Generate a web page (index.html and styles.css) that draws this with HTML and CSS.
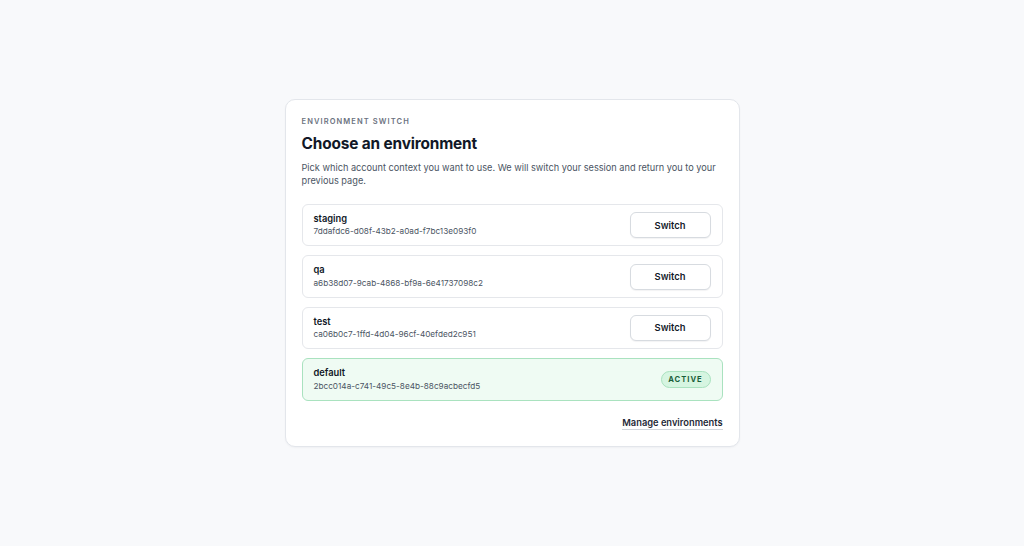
FILE: index.html
```html
<!DOCTYPE html>
<html lang="en">
<head>
<meta charset="utf-8">
<title>Choose an environment</title>
<link rel="stylesheet" href="styles.css">
</head>
<body>
<main class="page">
  <section class="card">
    <div class="eyebrow">ENVIRONMENT SWITCH</div>
    <h1 class="title">Choose an environment</h1>
    <p class="desc">Pick which account context you want to use. We will switch your session and return you to your previous page.</p>
    <ul class="envs">
      <li class="env">
        <div class="env-info"><div class="env-name">staging</div><div class="env-id">7ddafdc6-d08f-43b2-a0ad-f7bc13e093f0</div></div>
        <button class="btn">Switch</button>
      </li>
      <li class="env">
        <div class="env-info"><div class="env-name">qa</div><div class="env-id">a6b38d07-9cab-4868-bf9a-6e41737098c2</div></div>
        <button class="btn">Switch</button>
      </li>
      <li class="env">
        <div class="env-info"><div class="env-name">test</div><div class="env-id">ca06b0c7-1ffd-4d04-96cf-40efded2c951</div></div>
        <button class="btn">Switch</button>
      </li>
      <li class="env env-active">
        <div class="env-info"><div class="env-name">default</div><div class="env-id">2bcc014a-c741-49c5-8e4b-88c9acbecfd5</div></div>
        <span class="badge">ACTIVE</span>
      </li>
    </ul>
    <div class="footer"><a class="manage" href="#">Manage environments</a></div>
  </section>
</main>
</body>
</html>
```

FILE: styles.css
```css
* { box-sizing: border-box; }
html, body { margin: 0; padding: 0; }
body {
  background: #f8f9fb;
  font-family: Inter, "Noto Sans", sans-serif;
  color: #111827;
}
.page {
  height: 546px;
  display: flex;
  align-items: center;
  justify-content: center;
}
.card {
  width: 455px;
  background: #ffffff;
  border: 1px solid #e3e6eb;
  border-radius: 10px;
  padding: 16px 16px 16px;
  box-shadow: 0 1px 2px rgba(16, 24, 40, 0.04);
}
.eyebrow {
  font-size: 7.5px;
  font-weight: 600;
  letter-spacing: 1.1px;
  color: #6b7280;
  line-height: 12px;
}
.title {
  margin: 6.5px 0 0;
  font-size: 15.4px;
  font-weight: 700;
  line-height: 20px;
  letter-spacing: -0.15px;
  color: #111827;
}
.desc {
  margin: 6.5px 0 0;
  font-size: 9.2px;
  line-height: 13px;
  color: #4b5563;
}
.envs {
  list-style: none;
  margin: 17px 0 0;
  padding: 0;
  display: flex;
  flex-direction: column;
  gap: 8.8px;
}
.env {
  display: flex;
  align-items: center;
  justify-content: space-between;
  height: 42.6px;
  padding: 0 11px;
  border: 1px solid #e5e7eb;
  border-radius: 6px;
  background: #fff;
}
.env-active {
  background: #effbf3;
  border-color: #a9e2bf;
}
.env-name {
  font-size: 9.3px;
  font-weight: 600;
  line-height: 12px;
  color: #111827;
}
.env-id {
  font-size: 8.2px;
  line-height: 11px;
  color: #4b5563;
  margin-top: 1.5px;
}
.btn {
  width: 81px;
  height: 26px;
  border: 1px solid #d7dbe0;
  border-radius: 6px;
  background: #fff;
  font-family: inherit;
  font-size: 9.4px;
  font-weight: 600;
  color: #111827;
  box-shadow: 0 1px 1px rgba(16, 24, 40, 0.05);
}
.badge {
  display: inline-flex;
  align-items: center;
  justify-content: center;
  width: 50px;
  height: 17px;
  border-radius: 9px;
  background: #d6f5e1;
  border: 1px solid #a9e2bf;
  color: #1b5e3a;
  font-size: 7.6px;
  font-weight: 700;
  letter-spacing: 1px;
}
.footer {
  display: flex;
  justify-content: flex-end;
  margin-top: 15.5px;
}
.manage {
  font-size: 9.3px;
  font-weight: 600;
  color: #1f2937;
  text-decoration: none;
  border-bottom: 1px solid #d1d5db;
  line-height: 13px;
}
```
